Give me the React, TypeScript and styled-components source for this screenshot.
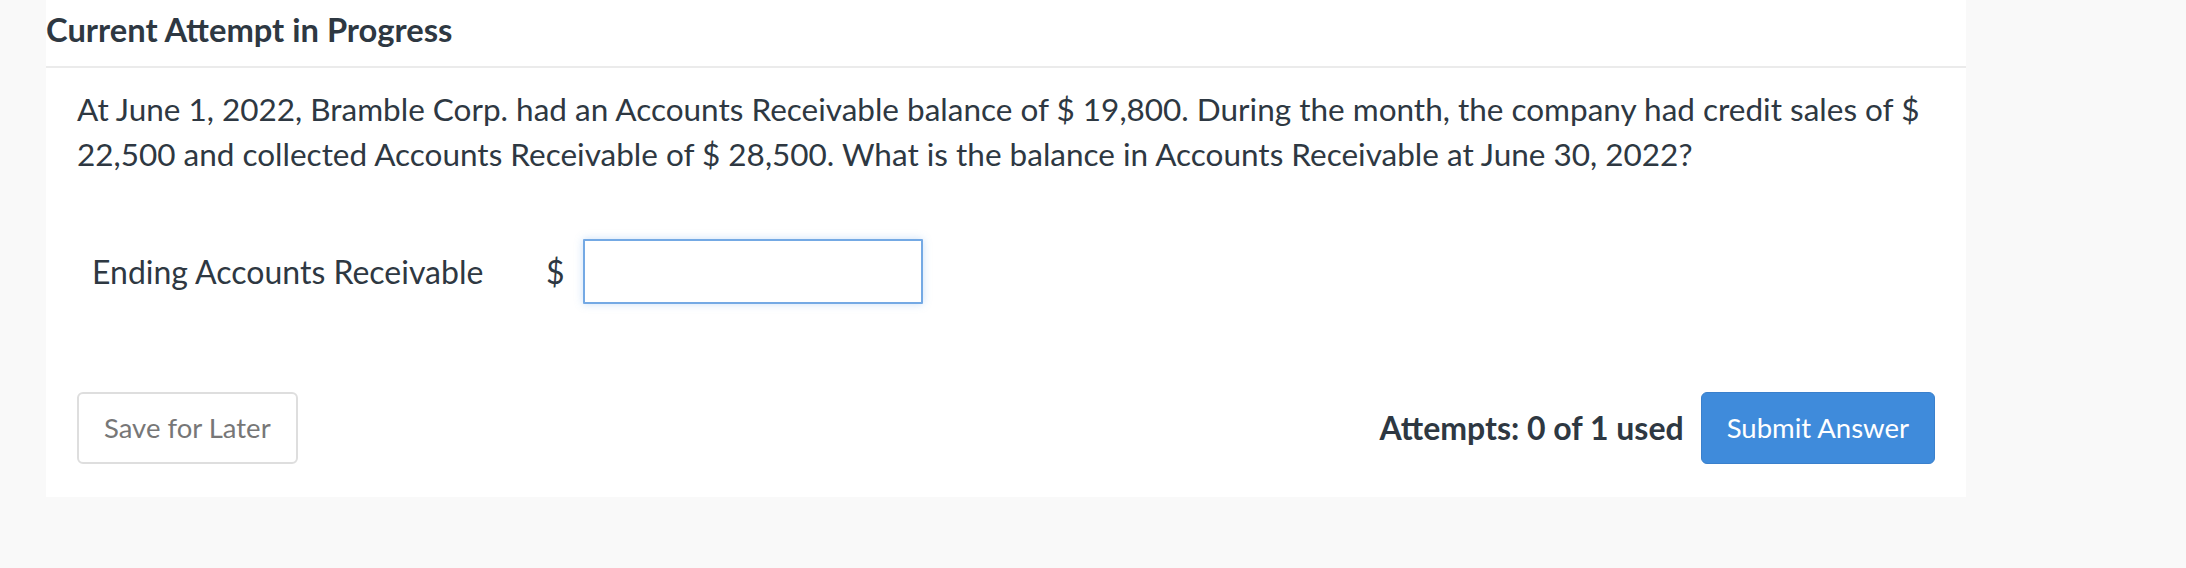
import React from "react";
import styled, { createGlobalStyle } from "styled-components";

const GlobalStyle = createGlobalStyle`
  html, body {
    margin: 0;
    padding: 0;
    background: #f9f9f9;
    font-family: Lato, "Noto Sans", sans-serif;
    color: #2e3842;
  }
`;

const Page = styled.div`
  display: flex;
  padding-left: 46px;
  height: 568px;
  background: #f9f9f9;
`;

const Panel = styled.section`
  width: 1920px;
  align-self: flex-start;
  background: #ffffff;
`;

const Header = styled.h2`
  margin: 0;
  height: 68px;
  padding: 0 0 7px;
  display: flex;
  align-items: center;
  font-size: 32.7px;
  font-weight: 700;
  color: #2e3842;
  border-bottom: 2px solid #ebebeb;
  box-sizing: border-box;
`;

const Body = styled.div`
  padding: 19px 31px 33px;
  display: flex;
  flex-direction: column;
`;

const Question = styled.p`
  margin: 0;
  font-size: 31.5px;
  line-height: 44.8px;
`;

const AnswerRow = styled.div`
  display: flex;
  align-items: center;
  margin-top: 62px;
  padding-left: 15px;
`;

const Label = styled.label`
  width: 454px;
  font-size: 32px;
`;

const Currency = styled.span`
  font-size: 32px;
  margin-right: 18px;
`;

const AmountInput = styled.input`
  width: 340px;
  height: 65px;
  box-sizing: border-box;
  border: 2px solid #74a9e4;
  border-radius: 1px;
  box-shadow: 0 0 8px rgba(102, 164, 233, 0.35);
  outline: none;
  font: inherit;
  font-size: 28px;
  padding: 0 10px;
`;

const Footer = styled.div`
  display: flex;
  align-items: center;
  margin-top: 88px;
`;

const Spacer = styled.div`
  flex: 1;
`;

const Attempts = styled.span`
  font-size: 32px;
  font-weight: 700;
  margin-right: 17px;
`;

const Button = styled.button<{ primary?: boolean }>`
  height: 72px;
  box-sizing: border-box;
  padding: 0 ${(p) => (p.primary ? "25px" : "25px")};
  font-family: Lato, "Noto Sans", sans-serif;
  font-size: ${(p) => (p.primary ? "27.5px" : "27.5px")};
  border-radius: 6px;
  cursor: pointer;
  color: ${(p) => (p.primary ? "#ffffff" : "#777777")};
  background: ${(p) => (p.primary ? "#3f8bdb" : "#ffffff")};
  border: ${(p) => (p.primary ? "1px solid #3a80cc" : "2px solid #dedede")};
`;

export default function App() {
  return (
    <>
      <GlobalStyle />
      <Page>
        <Panel>
          <Header>Current Attempt in Progress</Header>
          <Body>
            <Question>
              At June 1, 2022, Bramble Corp. had an Accounts Receivable balance
              of $ 19,800. During the month, the company had credit sales of $
              22,500 and collected Accounts Receivable of $ 28,500. What is the
              balance in Accounts Receivable at June 30, 2022?
            </Question>
            <AnswerRow>
              <Label htmlFor="ending-ar">Ending Accounts Receivable</Label>
              <Currency>$</Currency>
              <AmountInput id="ending-ar" type="text" />
            </AnswerRow>
            <Footer>
              <Button>Save for Later</Button>
              <Spacer />
              <Attempts>Attempts: 0 of 1 used</Attempts>
              <Button primary>Submit Answer</Button>
            </Footer>
          </Body>
        </Panel>
      </Page>
    </>
  );
}
